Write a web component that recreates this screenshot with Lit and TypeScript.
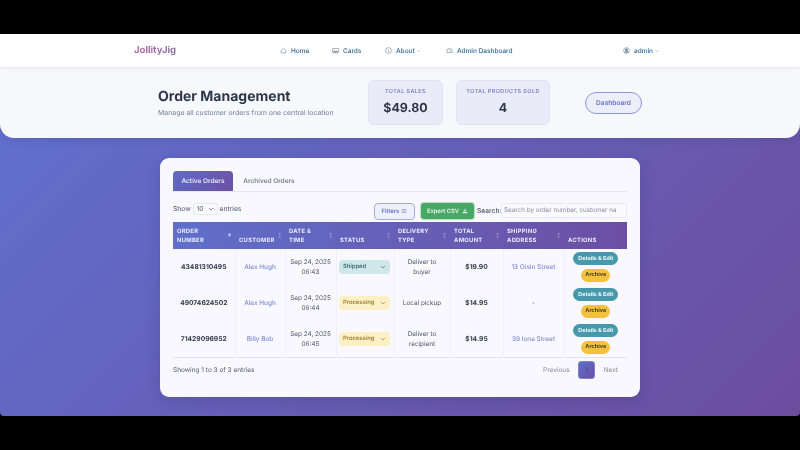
import { LitElement, css, html, svg } from 'lit';
import { customElement } from 'lit/decorators.js';

type Order = {
  id: string;
  customer: string;
  date: string;
  time: string;
  status: string;
  delivery: string[];
  total: string;
  address: string;
};

const orders: Order[] = [
  { id: '43481310495', customer: 'Alex Hugh', date: 'Sep 24, 2025', time: '06:43', status: 'Shipped', delivery: ['Deliver to', 'buyer'], total: '$19.90', address: '13 Oisin Street' },
  { id: '49074624502', customer: 'Alex Hugh', date: 'Sep 24, 2025', time: '06:44', status: 'Processing', delivery: ['Local pickup'], total: '$14.95', address: '-' },
  { id: '71429096952', customer: 'Billy Bob', date: 'Sep 24, 2025', time: '06:45', status: 'Processing', delivery: ['Deliver to', 'recipient'], total: '$14.95', address: '39 Iona Street' },
];

const columns = [
  { label: ['ORDER', 'NUMBER'], width: 62, sort: true },
  { label: ['CUSTOMER'], width: 50, sort: true },
  { label: ['DATE &', 'TIME'], width: 51, sort: true },
  { label: ['STATUS'], width: 58, sort: true },
  { label: ['DELIVERY', 'TYPE'], width: 56, sort: true },
  { label: ['TOTAL', 'AMOUNT'], width: 53, sort: true },
  { label: ['SHIPPING', 'ADDRESS'], width: 61, sort: true },
  { label: ['ACTIONS'], width: 63, sort: false },
];

const chevron = svg`<path d="M2.5 4.5 6 8l3.5-3.5" fill="none" stroke="currentColor" stroke-width="1.4" stroke-linecap="round" stroke-linejoin="round"/>`;

@customElement('app-root')
export class AppRoot extends LitElement {
  static styles = css`
    :host {
      display: block;
      width: 800px;
      height: 450px;
      background: #000;
      padding-top: 34px;
      box-sizing: border-box;
      overflow: hidden;
      font-family: Inter, 'Liberation Sans', sans-serif;
      color: #374151;
      text-rendering: geometricPrecision;
    }

    * {
      box-sizing: border-box;
    }

    .frame {
      height: 382px;
      background: linear-gradient(135deg, #5f72d2 0%, #6c4d9e 100%);
      border-radius: 0 0 4px 4px;
      overflow: hidden;
      filter: blur(0.55px);
    }

    .nav {
      height: 33px;
      background: #fff;
      display: flex;
      align-items: center;
      padding-left: 134px;
      position: relative;
      z-index: 1;
      box-shadow: 0 1px 4px rgba(0, 0, 0, 0.08);
    }

    .brand {
      font-size: 9.5px;
      font-weight: 700;
      width: 146px;
      background: linear-gradient(90deg, #b5639f 0%, #3f7cac 75%);
      -webkit-background-clip: text;
      background-clip: text;
      color: transparent;
      flex-shrink: 0;
    }

    .links {
      display: flex;
      align-items: center;
      font-size: 6.5px;
      font-weight: 500;
      color: #2f6690;
    }

    .link {
      display: flex;
      align-items: center;
      gap: 4px;
    }

    .link svg {
      width: 7px;
      height: 7px;
      color: #6b7f92;
      flex-shrink: 0;
    }

    .link--home {
      width: 52px;
    }

    .link--cards {
      width: 53px;
    }

    .link--about {
      width: 61px;
    }

    .link--admin {
      width: 177px;
    }

    .caret {
      font-size: 5px;
      color: #9aa7b4;
      margin-left: -2px;
    }

    .hero {
      height: 71px;
      background: #f7f8fc;
      border-radius: 0 0 14px 14px;
      box-shadow: 0 2px 8px rgba(40, 40, 90, 0.15);
      display: flex;
      align-items: center;
      padding-left: 158px;
    }

    .hero__text {
      width: 210px;
    }

    h1 {
      margin: 0;
      font-size: 14px;
      line-height: 18px;
      font-weight: 700;
      color: #2d3748;
    }

    .hero__text p {
      margin: 2px 0 0;
      font-size: 6.95px;
      line-height: 10px;
      color: #718096;
    }

    .stat {
      height: 45px;
      background: #e9ebf8;
      border: 1px solid #dfe2f5;
      border-radius: 6px;
      display: flex;
      flex-direction: column;
      align-items: center;
      padding-top: 8px;
    }

    .stat--sales {
      width: 75px;
      margin-right: 13px;
    }

    .stat--sold {
      width: 94px;
      margin-right: 35px;
    }

    .stat__label {
      font-size: 5.5px;
      line-height: 7px;
      font-weight: 600;
      letter-spacing: 0.4px;
      color: #7a83c4;
    }

    .stat__value {
      margin-top: 4px;
      font-size: 12.4px;
      line-height: 16px;
      font-weight: 700;
      color: #2d3748;
    }

    .hero__button {
      width: 57px;
      height: 22px;
      border: 1.5px solid #8c97d8;
      border-radius: 11px;
      background: #eceef9;
      display: flex;
      align-items: center;
      justify-content: center;
      font-size: 6.6px;
      font-weight: 600;
      color: #6472c4;
    }

    .card {
      width: 480px;
      height: 239px;
      margin: 20px 0 0 160px;
      background: #f8f8fe;
      border-radius: 9px;
      padding: 13px;
      box-shadow: 0 4px 14px rgba(30, 30, 80, 0.18);
    }

    .tabs {
      height: 21px;
      display: flex;
      border-bottom: 1px solid #e8e9f0;
      font-size: 6.5px;
      font-weight: 600;
    }

    .tab {
      width: 60px;
      height: 20px;
      display: flex;
      align-items: center;
      justify-content: center;
      border-radius: 4px 4px 0 0;
      color: #7b8190;
    }

    .tab--active {
      background: linear-gradient(135deg, #5f6cc6, #6d4fa5);
      color: #e6e8fa;
      margin-right: 3px;
    }

    .tab--archived {
      width: 66px;
    }

    .toolbar {
      height: 30px;
      padding-top: 8px;
      display: flex;
      align-items: center;
      font-size: 6.7px;
      color: #4a5568;
    }

    .length {
      display: flex;
      align-items: center;
      gap: 2px;
      margin-top: -5px;
      flex: 1;
    }

    .length__select {
      width: 25px;
      height: 12px;
      border: 1px solid #e6e7f0;
      border-radius: 2px;
      background: #fafafe;
      display: flex;
      align-items: center;
      justify-content: space-between;
      padding: 0 3px;
    }

    .length__select svg {
      width: 6px;
      height: 6px;
      color: #555d6e;
    }

    .filters {
      width: 41px;
      height: 17px;
      border: 1.5px solid #a3acdf;
      border-radius: 4px;
      background: #eef0fb;
      color: #7582cf;
      font-size: 5.8px;
      font-weight: 700;
      display: flex;
      align-items: center;
      justify-content: center;
      gap: 2px;
      margin-right: 6px;
    }

    .filters svg,
    .export svg {
      width: 6px;
      height: 6px;
    }

    .export {
      width: 53px;
      height: 16px;
      border-radius: 3px;
      background: #4aa866;
      box-shadow: 0 0 1px 1px rgba(110, 200, 140, 0.5);
      color: #e4f5e9;
      font-size: 5.8px;
      font-weight: 600;
      display: flex;
      align-items: center;
      justify-content: center;
      gap: 3px;
      margin-right: 3px;
    }

    .search-label {
      width: 24px;
      flex-shrink: 0;
      font-weight: 500;
      white-space: nowrap;
    }

    .search {
      width: 126px;
      height: 15px;
      margin-top: -1px;
      border: 1px solid #e8e9f2;
      border-radius: 3px;
      background: #f9f9fe;
      color: #8a8f9c;
      font-size: 6.3px;
      line-height: 13px;
      padding-left: 2px;
      white-space: nowrap;
      overflow: hidden;
    }

    table {
      width: 454px;
      table-layout: fixed;
      border-collapse: collapse;
      border-bottom: 1px solid #e2e3ea;
    }

    thead tr {
      height: 27px;
      background: linear-gradient(90deg, #5f6fcb 0%, #6c4fa3 100%);
    }

    th {
      position: relative;
      padding: 0 0 4px 4px;
      vertical-align: bottom;
      text-align: left;
      font-size: 5.8px;
      line-height: 9px;
      font-weight: 700;
      letter-spacing: 0.3px;
      color: #e9ebfa;
    }

    .sort {
      position: absolute;
      right: 3px;
      bottom: 9px;
      font-size: 5px;
      line-height: 8px;
      color: rgba(255, 255, 255, 0.3);
    }

    .sort--first {
      color: rgba(255, 255, 255, 0.75);
    }

    tbody tr {
      height: 36px;
    }

    td {
      padding: 0;
      text-align: center;
      vertical-align: middle;
      font-size: 6.4px;
      line-height: 10px;
      color: #4f5666;
      border-right: 1px solid #f0f0f7;
    }

    td:last-child {
      border-right: none;
    }

    td.strong {
      font-size: 6.7px;
      font-weight: 700;
      color: #333b4a;
    }

    td.accent {
      font-size: 6.45px;
      color: #7f8bd6;
      font-weight: 500;
    }

    .status {
      width: 51px;
      height: 14px;
      margin-left: 2.5px;
      border-radius: 4px;
      display: flex;
      align-items: center;
      justify-content: space-between;
      padding: 0 4px;
      font-size: 5.8px;
      font-weight: 600;
    }

    .status svg {
      width: 6px;
      height: 6px;
    }

    .status--shipped {
      background: #cfe6ea;
      color: #3d6f73;
    }

    .status--processing {
      background: #fdf0c6;
      color: #a08234;
    }

    .actions {
      display: flex;
      flex-direction: column;
      align-items: center;
      gap: 3.5px;
    }

    .pill {
      height: 13px;
      border-radius: 7px;
      display: flex;
      align-items: center;
      justify-content: center;
      font-size: 5.5px;
      font-weight: 700;
    }

    .pill--edit {
      width: 45px;
      background: #4898ac;
      color: #eef8fa;
    }

    .pill--archive {
      width: 29px;
      background: #f2c13f;
      color: #4b3f1a;
    }

    .footer {
      display: flex;
      align-items: center;
      height: 23px;
      margin-top: 1px;
      font-size: 6.5px;
      color: #555c6b;
    }

    .footer__info {
      flex: 1;
    }

    .pager {
      display: flex;
      align-items: center;
      color: #858b98;
    }

    .pager__current {
      width: 17px;
      height: 18px;
      border-radius: 3px;
      margin: 0 8.5px;
      background: linear-gradient(135deg, #5f6fcb, #6c4fa3);
      color: #3c3c80;
      display: flex;
      align-items: center;
      justify-content: center;
      border: 1px solid #7d84cf;
    }

    .pager__next {
      margin-right: 9px;
    }
  `;

  private icon(path: unknown) {
    return html`<svg viewBox="0 0 12 12" fill="none" stroke="currentColor" stroke-width="1">${path}</svg>`;
  }

  private renderNav() {
    return html`
      <nav class="nav">
        <div class="brand">JollityJig</div>
        <div class="links">
          <div class="link link--home">
            ${this.icon(svg`<path d="M2 6 6 2.2 10 6v4.2H2z" stroke-linejoin="round"/>`)} Home
          </div>
          <div class="link link--cards">
            ${this.icon(svg`<rect x="1" y="2.5" width="10" height="7.5" rx=".6"/><path d="m2 9 2.6-3 2 2 1.6-1.4L10 9" fill="currentColor" stroke-width=".6"/>`)} Cards
          </div>
          <div class="link link--about">
            ${this.icon(svg`<circle cx="6" cy="6" r="5"/><path d="M6 5.2v3.4M6 3.2v1"/>`)} About <span class="caret">⌄</span>
          </div>
          <div class="link link--admin">
            ${this.icon(svg`<path d="M1.5 9.5V7a4.5 4.5 0 0 1 9 0v2.5z"/><path d="m6 8 1.5-2.5M4 4.5v1M8 4.5v1"/>`)} Admin Dashboard
          </div>
          <div class="link">
            ${this.icon(svg`<circle cx="6" cy="6" r="5"/><circle cx="6" cy="4.7" r="1.9" fill="currentColor"/><path d="M2.8 9.6c.6-1.6 1.8-2.2 3.2-2.2s2.6.6 3.2 2.2" fill="currentColor"/>`)} admin <span class="caret">⌄</span>
          </div>
        </div>
      </nav>
    `;
  }

  private renderHero() {
    return html`
      <header class="hero">
        <div class="hero__text">
          <h1>Order Management</h1>
          <p>Manage all customer orders from one central location</p>
        </div>
        <div class="stat stat--sales">
          <div class="stat__label">TOTAL SALES</div>
          <div class="stat__value">$49.80</div>
        </div>
        <div class="stat stat--sold">
          <div class="stat__label">TOTAL PRODUCTS SOLD</div>
          <div class="stat__value">4</div>
        </div>
        <div class="hero__button">Dashboard</div>
      </header>
    `;
  }

  private renderToolbar() {
    return html`
      <div class="toolbar">
        <div class="length">
          Show
          <div class="length__select">10 ${this.icon(svg`${chevron}`)}</div>
          entries
        </div>
        <div class="filters">
          Filters ${this.icon(svg`<path d="M1.5 3h9M1.5 6h9M1.5 9h9" stroke-width="1.2"/>`)}
        </div>
        <div class="export">
          Export CSV
          <svg viewBox="0 0 12 12"><path d="M6 1.5v5M3.6 4.6 6 7l2.4-2.4" fill="none" stroke="currentColor" stroke-width="1.8"/><path d="M1.5 8h9v2.5h-9z" fill="currentColor"/></svg>
        </div>
        <span class="search-label">Search:</span>
        <div class="search">Search by order number, customer na</div>
      </div>
    `;
  }

  private renderRow(order: Order) {
    const statusClass = order.status === 'Shipped' ? 'status--shipped' : 'status--processing';
    return html`
      <tr>
        <td class="strong">${order.id}</td>
        <td class="accent">${order.customer}</td>
        <td>${order.date}<br />${order.time}</td>
        <td>
          <div class="status ${statusClass}">${order.status} ${this.icon(svg`${chevron}`)}</div>
        </td>
        <td>${order.delivery.map((line, i) => html`${i ? html`<br />` : ''}${line}`)}</td>
        <td class="strong">${order.total}</td>
        <td class=${order.address === '-' ? '' : 'accent'}>${order.address}</td>
        <td>
          <div class="actions">
            <div class="pill pill--edit">Details &amp; Edit</div>
            <div class="pill pill--archive">Archive</div>
          </div>
        </td>
      </tr>
    `;
  }

  private renderTable() {
    return html`
      <table>
        <colgroup>
          ${columns.map((c) => html`<col style="width:${c.width}px" />`)}
        </colgroup>
        <thead>
          <tr>
            ${columns.map(
              (c, i) => html`<th>
                ${c.label.map((line, j) => html`${j ? html`<br />` : ''}${line}`)}
                ${c.sort ? html`<span class="sort ${i === 0 ? 'sort--first' : ''}">${i === 0 ? '↑' : '↕'}</span>` : ''}
              </th>`
            )}
          </tr>
        </thead>
        <tbody>
          ${orders.map((o) => this.renderRow(o))}
        </tbody>
      </table>
    `;
  }

  render() {
    return html`
      <div class="frame">
        ${this.renderNav()} ${this.renderHero()}
        <main class="card">
          <div class="tabs">
            <div class="tab tab--active">Active Orders</div>
            <div class="tab tab--archived">Archived Orders</div>
          </div>
          ${this.renderToolbar()} ${this.renderTable()}
          <div class="footer">
            <div class="footer__info">Showing 1 to 3 of 3 entries</div>
            <div class="pager">
              Previous
              <div class="pager__current">1</div>
              <span class="pager__next">Next</span>
            </div>
          </div>
        </main>
      </div>
    `;
  }
}
